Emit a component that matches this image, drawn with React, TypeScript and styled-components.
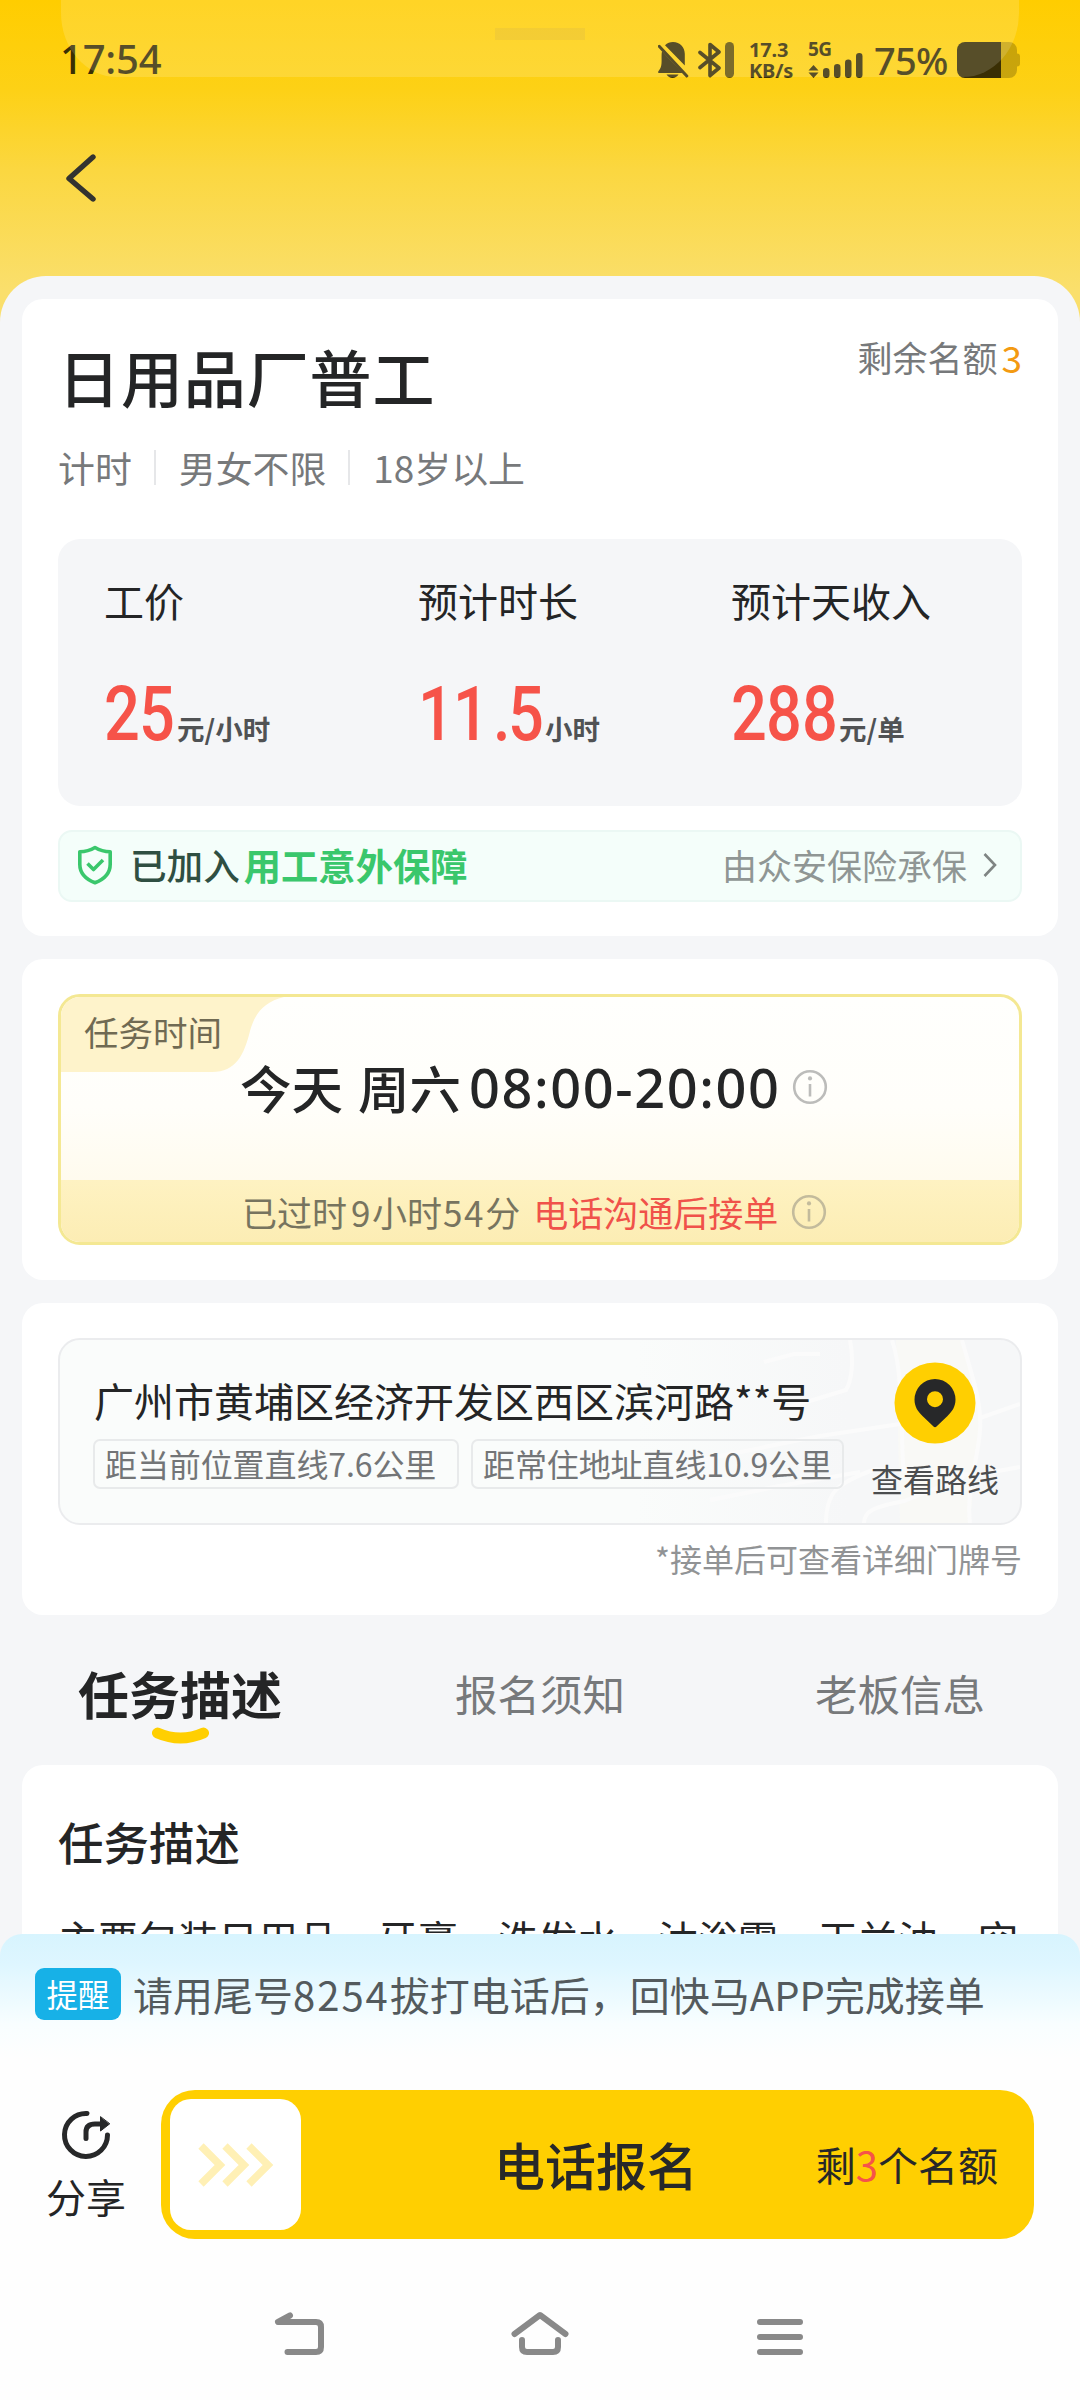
import React from "react";
import styled, { createGlobalStyle } from "styled-components";

const CJK = `"Noto Sans CJK SC", "Noto Sans", sans-serif`;
const LATIN = `"Noto Sans", "Noto Sans CJK SC", sans-serif`;

const GlobalStyle = createGlobalStyle`
  * { box-sizing: border-box; }
  body { margin: 0; background: #fff; font-family: ${CJK}; }
  svg { display: block; flex: none; }
`;

const Screen = styled.main`
  position: relative;
  width: 1080px;
  height: 2400px;
  overflow: hidden;
  display: flex;
  flex-direction: column;
  background: linear-gradient(180deg, #ffcd00 0, #fdd116 90px, #fbd740 170px, #fadf6c 290px, #fadf6c 400px, #fff 401px);
`;

const Text = styled.span<{
  $size: number;
  $color?: string;
  $weight?: number;
  $line?: number;
  $space?: number;
  $left?: number;
}>`
  margin: 0 0 0 ${(p) => p.$left ?? 0}px;
  font-size: ${(p) => p.$size}px;
  color: ${(p) => p.$color ?? "#242526"};
  font-weight: ${(p) => p.$weight ?? 400};
  line-height: ${(p) => (p.$line ? `${p.$line}px` : "inherit")};
  letter-spacing: ${(p) => p.$space ?? 0}px;
  white-space: nowrap;
`;

/* ---------- status bar ---------- */

const StatusBar = styled.header`
  height: 120px;
  padding: 0 60px 0 60px;
  display: flex;
  align-items: center;
  justify-content: space-between;
  color: #3a2f04;
`;

const Clock = styled.time`
  margin-top: -2px;
  font: 500 40px/60px ${LATIN};
  letter-spacing: -0.2px;
`;

const StatusIcons = styled.div`
  display: flex;
  align-items: center;
`;

const BluetoothIcon = styled.svg`
  margin-left: 9px;
`;

const Speed = styled.div`
  width: 42px;
  margin: 0 17px 0 15px;
  display: flex;
  flex-direction: column;
  font: 700 20px/21px ${LATIN};
  letter-spacing: -0.2px;
  white-space: nowrap;
`;

const Signal = styled.div`
  width: 55px;
  height: 36px;
  position: relative;
`;

const Network = styled.span`
  position: absolute;
  left: 0;
  top: -3px;
  font: 700 19px/20px ${LATIN};
  letter-spacing: -0.5px;
`;

const Percent = styled.span`
  width: 73px;
  margin: -1px 10px 0 11px;
  font: 500 38px/60px ${LATIN};
  letter-spacing: -0.7px;
`;

const Glass = styled.div`
  position: absolute;
  left: 61px;
  top: 0;
  width: 958px;
  height: 77px;
  border-radius: 0 0 56px 56px / 0 0 64px 64px;
  background: rgba(255, 255, 255, 0.15);
`;

const GlassHandle = styled.div`
  width: 90px;
  height: 12px;
  margin: 28px auto 0;
  background: rgba(205, 175, 80, 0.22);
`;

const NavBar = styled.nav`
  height: 156px;
  padding: 34px 0 0 64px;
`;

/* ---------- sheet ---------- */

const SheetWrap = styled.div`
  flex: 1;
  min-height: 0;
  display: flex;
  flex-direction: column;
  margin-bottom: -24px;
`;

const Sheet = styled.section`
  flex: 1;
  min-height: 0;
  overflow: hidden;
  padding: 23px 22px 0;
  border-radius: 46px 46px 0 0;
  background: #f5f6f8;
`;

const Card = styled.article<{ $top?: number; $height: number; $pad: number }>`
  height: ${(p) => p.$height}px;
  margin-top: ${(p) => p.$top ?? 0}px;
  padding: ${(p) => p.$pad}px 36px 0;
  border-radius: 21px;
  background: #fff;
`;

const TitleRow = styled.div`
  display: flex;
  justify-content: space-between;
  align-items: flex-start;
`;

const Quota = styled.div`
  display: flex;
  margin: -4px 1px 0 0;
  gap: 4px;
  line-height: 40px;
`;

const Meta = styled.div`
  display: flex;
  align-items: center;
  margin-top: 36px;
  line-height: 40px;
`;

const Divider = styled.i`
  width: 2px;
  height: 35px;
  margin: 0 23px 0 22px;
  background: #e6e7e9;
`;

const Stats = styled.div`
  height: 267px;
  margin-top: 52px;
  padding: 39px 0 0 46px;
  display: grid;
  grid-template-columns: 314px 313px 1fr;
  border-radius: 22px;
  background: #f5f6f8;
`;

const Stat = styled.div`
  display: flex;
  flex-direction: column;
`;

const StatValue = styled.div`
  display: flex;
  align-items: baseline;
  margin-top: 62px;
`;

const Figure = styled.span<{ $width: number }>`
  display: flex;
  width: ${(p) => p.$width}px;
  margin-right: 3px;
  color: #f65349;
  font: 500 76px/60px Roboto, sans-serif;
`;

const Digit = styled.span<{ $narrow?: boolean }>`
  width: ${(p) => (p.$narrow ? 15 : 35.3)}px;
  margin-left: ${(p) => (p.$narrow ? 4 : 0)}px;
  transform: scaleX(0.83);
  transform-origin: 0 50%;
`;

const Insurance = styled.div`
  height: 72px;
  margin-top: 24px;
  padding: 0 23px 3px 17px;
  display: flex;
  align-items: center;
  border: 2px solid #ebf8f4;
  border-radius: 14px;
  background: #f4fefa;
`;

const Insurer = styled.div`
  margin-left: auto;
  display: flex;
  align-items: center;
  gap: 16px;
`;

/* ---------- schedule ---------- */

const Schedule = styled.div`
  position: relative;
  height: 251px;
  overflow: hidden;
  display: flex;
  flex-direction: column;
  justify-content: space-between;
  border: 3px solid #f4e893;
  border-radius: 22px;
  background: linear-gradient(180deg, #fffffd 0%, #fffefa 45%, #fffbee 75%);
`;

const ScheduleTag = styled.div`
  position: absolute;
  left: 0;
  top: 0;
  padding: 14px 0 0 23px;
`;

const TagShape = styled.svg`
  position: absolute;
  left: 0;
  top: 0;
`;

const TagLabel = styled.span`
  position: relative;
  color: #706a53;
  font-size: 34.5px;
  line-height: 40px;
`;

const ScheduleMain = styled.div`
  display: flex;
  align-items: center;
  height: 60px;
  margin-top: 60px;
  padding-left: 179px;
`;

const Hours = styled.span`
  margin: 0 12px 0 8px;
  font: 500 54px/60px ${LATIN};
  letter-spacing: 1.6px;
  color: #242526;
`;

const ScheduleFoot = styled.div`
  height: 62px;
  padding: 2px 0 0 181px;
  display: flex;
  align-items: center;
  gap: 13px;
  background: linear-gradient(180deg, #fef2c2, #fcedb4);
`;

const Num = styled.span<{ $gap?: number }>`
  margin-left: ${(p) => p.$gap ?? 0}px;
  letter-spacing: ${(p) => (p.$gap === undefined ? 2 : 1.6)}px;
`;

/* ---------- address ---------- */

const Place = styled.div`
  position: relative;
  height: 187px;
  overflow: hidden;
  display: flex;
  justify-content: space-between;
  border: 2px solid #ebecee;
  border-radius: 22px;
  background: linear-gradient(90deg, #fafcfb 60%, #f6f7f8 82%);
`;

const MapArt = styled.svg`
  position: absolute;
  right: 0;
  top: 0;
`;

const PlaceInfo = styled.div`
  position: relative;
  padding: 38px 0 0 34px;
`;

const Chips = styled.div`
  display: flex;
  gap: 12px;
  margin: 17px 0 0 -1px;
`;

const Chip = styled.span<{ $width: number }>`
  width: ${(p) => p.$width}px;
  height: 50px;
  padding-left: 10px;
  border: 2px solid #e8eaeb;
  border-radius: 7px;
  color: #737577;
  font-size: 32px;
  line-height: 44px;
  letter-spacing: -0.1px;
  white-space: nowrap;
`;

const Route = styled.div`
  position: relative;
  width: 130px;
  margin: 22px 20px 0 0;
  display: flex;
  flex-direction: column;
  align-items: center;
  gap: 14px;
`;

const Note = styled.p`
  margin: 15px 0 0;
  color: #919395;
  font-size: 32px;
  line-height: 36px;
  text-align: right;
`;

/* ---------- tabs ---------- */

const Tabs = styled.div`
  height: 150px;
  margin: 0 -22px;
  display: grid;
  grid-template-columns: repeat(3, 1fr);
  justify-items: center;
`;

const Tab = styled.div`
  display: flex;
  flex-direction: column;
  align-items: center;
  padding-top: 48px;
  gap: 4px;
`;

const Body = styled.p`
  margin: 43px 0 0;
  font-size: 40px;
  line-height: 54px;
  color: #242526;
  white-space: nowrap;
`;

/* ---------- footer ---------- */

const Footer = styled.footer`
  position: relative;
  height: 466px;
  flex: none;
  display: flex;
  flex-direction: column;
  border-radius: 22px 22px 0 0;
  background: linear-gradient(180deg, #d7f4fe 0, #def6ff 30px, #f8feff 90px, #fefefe 125px);
`;

const Reminder = styled.div`
  display: flex;
  align-items: center;
  padding: 34px 0 0 35px;
`;

const Badge = styled.span`
  width: 86px;
  height: 52px;
  margin-right: 12px;
  border-radius: 9px;
  background: #17b1e7;
  color: #fff;
  font-size: 31.5px;
  line-height: 50px;
  text-align: center;
`;

const Actions = styled.div`
  display: flex;
  margin-top: 70px;
  padding: 0 46px 0 30px;
`;

const Share = styled.div`
  width: 112px;
  margin-right: 19px;
  padding-top: 20px;
  display: flex;
  flex-direction: column;
  align-items: center;
  gap: 14px;
`;

const ApplyButton = styled.div`
  flex: 1;
  height: 149px;
  padding: 0 36px 0 9px;
  display: flex;
  align-items: center;
  border-radius: 34px;
  background: #ffcf01;
`;

const Knob = styled.div`
  width: 131px;
  height: 131px;
  display: flex;
  align-items: center;
  justify-content: center;
  border-radius: 21px;
  background: #fff;
`;

const ApplyLabel = styled.strong`
  margin: -2px 0 0 193px;
  font-size: 51px;
  font-weight: 500;
  line-height: 60px;
  color: #272829;
`;

const Remaining = styled.div`
  margin: -1px 0 0 auto;
  font-size: 40px;
  line-height: 48px;
  color: #272829;
`;

const SystemNav = styled.div`
  display: flex;
  justify-content: space-between;
  margin-top: 70px;
  padding: 0 270px;
`;

const NavIcon = ({ d }: { d: string }) => (
  <svg width="60" height="56" viewBox="0 0 60 56" fill="none">
    <path d={d} stroke="#898989" strokeWidth="6" strokeLinecap="round" strokeLinejoin="round" />
  </svg>
);

const Info = ({ color }: { color: string }) => (
  <svg width="36" height="36" viewBox="0 0 36 36" fill="none">
    <circle cx="18" cy="18" r="15.8" stroke={color} strokeWidth="2.6" />
    <circle cx="18" cy="9.4" r="2.1" fill={color} />
    <path d="M18 15v12.6" stroke={color} strokeWidth="2.6" />
  </svg>
);

interface StatProps {
  label: string;
  value: string;
  unit: string;
  width: number;
}

const stats: StatProps[] = [
  { label: "工价", value: "25", unit: "元/小时", width: 70 },
  { label: "预计时长", value: "11.5", unit: "小时", width: 124 },
  { label: "预计天收入", value: "288", unit: "元/单", width: 105 },
];

const meta = ["计时", "男女不限", "18岁以上"];
const tabs = ["任务描述", "报名须知", "老板信息"];

export default function App() {
  return (
    <Screen>
      <GlobalStyle />
      <StatusBar>
        <Clock>17:54</Clock>
        <StatusIcons>
          <svg width="31" height="36" viewBox="0 0 31 36" fill="currentColor">
            <path d="M7 3.2C9.300 1.200 12 0 15 0c7 0 11.800 5 11.800 12v11.500L7 3.200zM4 9.300 24.500 31H.8c-.8 0-.9-1-.4-1.700C2.500 26.500 3.600 24.500 3.600 19c0-3.700-.2-7 .4-9.700z" />
            <path d="M8.500 32.500h12c-1.500 2.300-3.500 3.500-6 3.500s-4.500-1.200-6-3.500z" />
            <path d="M1.200 4.300 28.800 34" stroke="currentColor" strokeWidth="3" strokeLinecap="round" />
          </svg>
          <BluetoothIcon width="36" height="36" viewBox="0 0 36 36" fill="none">
            <path
              d="M2 10.500 21 26 12 33.500V2.500L21 10 2 25.500"
              stroke="currentColor"
              strokeWidth="3.600"
              strokeLinejoin="round"
              strokeLinecap="round"
            />
            <rect x="27" width="9" height="36" rx="4.500" fill="currentColor" opacity=".78" />
          </BluetoothIcon>
          <Speed>
            <span>17.3</span>
            <span>KB/s</span>
          </Speed>
          <Signal>
            <Network>5G</Network>
            <svg width="55" height="36" viewBox="0 0 55 36" fill="currentColor">
              <path d="M5.500 23 10.500 28.500H.5zM5.500 36 10.500 30.500H.5z" />
              <rect x="15" y="26" width="6.500" height="10" rx="3.200" />
              <rect x="26" y="22" width="6.500" height="14" rx="3.200" />
              <rect x="37" y="17.500" width="6.500" height="18.500" rx="3.200" />
              <rect x="48" y="11" width="6.500" height="25" rx="3.200" />
            </svg>
          </Signal>
          <Percent>75%</Percent>
          <svg width="63" height="36" viewBox="0 0 63 36" fill="currentColor">
            <path d="M44 0h8a8 8 0 0 1 8 8v3.500a3 3 0 0 1 3 3v7a3 3 0 0 1-3 3V28a8 8 0 0 1-8 8h-8z" opacity=".27" />
            <path d="M8 0h36v36H8a8 8 0 0 1-8-8V8a8 8 0 0 1 8-8z" />
          </svg>
        </StatusIcons>
      </StatusBar>
      <Glass>
        <GlassHandle />
      </Glass>
      <NavBar>
        <svg width="34" height="48" viewBox="0 0 34 48" fill="none">
          <path d="M29 3 5 24.500 29 45" stroke="#333330" strokeWidth="5.400" strokeLinecap="round" strokeLinejoin="round" />
        </svg>
      </NavBar>

      <SheetWrap>
        <Sheet>
          <Card $height={637} $pad={42}>
            <TitleRow>
              <Text as="h1" $size={62} $weight={500} $line={70} $space={0.9}>
                日用品厂普工
              </Text>
              <Quota>
                <Text $size={35} $color="#77797b">剩余名额</Text>
                <Text $size={37} $color="#f39a12" $space={-1}>3</Text>
              </Quota>
            </TitleRow>
            <Meta>
              {meta.map((item, i) => (
                <React.Fragment key={item}>
                  {i > 0 && <Divider />}
                  <Text $size={36.9} $color="#77797b">{item}</Text>
                </React.Fragment>
              ))}
            </Meta>
            <Stats>
              {stats.map(({ label, value, unit, width }) => (
                <Stat key={label}>
                  <Text $size={40} $line={44}>{label}</Text>
                  <StatValue>
                    <Figure $width={width}>
                      {[...value].map((c, i) => (
                        <Digit key={i} $narrow={c === "."}>{c}</Digit>
                      ))}
                    </Figure>
                    <Text $size={27.5} $weight={700} $color="#505254">{unit}</Text>
                  </StatValue>
                </Stat>
              ))}
            </Stats>
            <Insurance>
              <svg width="36" height="40" viewBox="0 0 36 40" fill="none" stroke="#3ac76c" strokeWidth="3.600" strokeLinejoin="round">
                <path d="M18 2.500c5 3 10 4.200 15.200 4.300v12.400c0 9-6 15-15.200 18.600C8.800 34.200 2.800 28.200 2.800 19.200V6.800C8 6.700 13 5.500 18 2.500z" />
                <path d="m10.500 18.500 6 6 9.500-9.500" />
              </svg>
              <Text $size={36.6} $weight={500} $color="#2f4f42" $left={17}>已加入</Text>
              <Text $size={37.3} $weight={700} $color="#3ac76c" $left={4}>用工意外保障</Text>
              <Insurer>
                <Text $size={35} $color="#8f9694">由众安保险承保</Text>
                <svg width="14" height="26" viewBox="0 0 14 26" fill="none">
                  <path d="M1.500 2 12 13 1.500 24" stroke="#7f8583" strokeWidth="2.600" />
                </svg>
              </Insurer>
            </Insurance>
          </Card>

          <Card $top={23} $height={321} $pad={35}>
            <Schedule>
              <ScheduleTag>
                <TagShape width="225" height="76" viewBox="0 0 225 76">
                  <path d="M0 0h223c-20 5-29 16-34 34-6 24-14 41-38 41H0z" fill="#fef3cb" />
                </TagShape>
                <TagLabel>任务时间</TagLabel>
              </ScheduleTag>
              <ScheduleMain>
                <Text $size={51.5} $weight={500} $line={60}>今天</Text>
                <Text $size={51.5} $weight={500} $line={60} $left={15}>周六</Text>
                <Hours>08:00-20:00</Hours>
                <Info color="#bcbcba" />
              </ScheduleMain>
              <ScheduleFoot>
                <Text $size={35} $line={48} $color="#77745f">
                  已过时<Num $gap={4}>9</Num>小时<Num $gap={1}>54</Num>分
                </Text>
                <Text $size={35} $line={48} $color="#f0524a">电话沟通后接单</Text>
                <Info color="#c3bb9c" />
              </ScheduleFoot>
            </Schedule>
          </Card>

          <Card $top={23} $height={312} $pad={35}>
            <Place>
              <MapArt width="340" height="183" viewBox="0 0 340 183" fill="none" stroke="#fbfbfb" strokeWidth="4">
                <path d="M216 0h66l18 70-10 113h-70z" fill="#f9f9f6" stroke="none" />
                <path d="M84 22l30-8 26 0M170 0c4 20 2 40-4 50l-66 20M212 0c14 40 8 120 12 130M282 0c8 30 20 60 18 90s-14 60-10 93M300 78l40-14M20 120l120-24 80-12M30 160l70-14 80-14M146 183c0-30 10-40 50-54l100 6 44-8M184 183c0-12 10-16 40-22l60-24" />
              </MapArt>
              <PlaceInfo>
                <Text as="div" $size={40} $line={44}>广州市黄埔区经济开发区西区滨河路**号</Text>
                <Chips>
                  <Chip $width={366}>距当前位置直线7.6公里</Chip>
                  <Chip $width={373}>距常住地址直线10.9公里</Chip>
                </Chips>
              </PlaceInfo>
              <Route>
                <svg width="82" height="82" viewBox="0 0 82 82">
                  <circle cx="41" cy="41" r="40.500" fill="#ffcf01" />
                  <path
                    fillRule="evenodd"
                    d="M41 17a20.500 20.500 0 0 1 20.500 20.500c0 7.500-3.500 12-8 16.500L42.500 64.500a2.200 2.200 0 0 1-3 0L28.500 54c-4.500-4.500-8-9-8-16.500A20.500 20.500 0 0 1 41 17zm0 12.200a8 8 0 1 0 0 16 8 8 0 0 0 0-16z"
                    fill="#272829"
                  />
                </svg>
                <Text $size={32} $line={40} $color="#4b4d4f">查看路线</Text>
              </Route>
            </Place>
            <Note>*接单后可查看详细门牌号</Note>
          </Card>

          <Tabs>
            {tabs.map((name, i) => (
              <Tab key={name}>
                <Text $size={i ? 42.5 : 51} $weight={i ? 400 : 700} $line={60} $color={i ? "#77797b" : "#242526"}>
                  {name}
                </Text>
                {i === 0 && (
                  <svg width="58" height="18" viewBox="0 0 58 18" fill="none">
                    <path d="M6.500 6q23 10 46 0" stroke="#ffcf01" strokeWidth="11" strokeLinecap="round" />
                  </svg>
                )}
              </Tab>
            ))}
          </Tabs>

          <Card $height={300} $pad={49}>
            <Text as="div" $size={45.5} $weight={500} $line={54}>任务描述</Text>
            <Body>主要包装日用品、牙膏、洗发水、沐浴露、玉兰油、空</Body>
          </Card>
        </Sheet>
      </SheetWrap>

      <Footer>
        <Reminder>
          <Badge>提醒</Badge>
          <Text $size={40} $line={48} $color="#535a5d">
            请用尾号<Num>8254</Num>拔打电话后，回快马APP完成接单
          </Text>
        </Reminder>
        <Actions>
          <Share>
            <svg width="50" height="50" viewBox="0 0 50 50" fill="none" stroke="#272829" strokeWidth="5" strokeLinecap="round">
              <path d="M26 3.500A21.500 21.500 0 1 0 46.500 25" />
              <path d="M25 28.500V22c0-6 3.500-8 9-8h6" />
              <path d="M39.500 7v14l9-7z" fill="#272829" strokeWidth="1" strokeLinejoin="round" />
            </svg>
            <Text $size={40} $line={44}>分享</Text>
          </Share>
          <ApplyButton>
            <Knob>
              <svg width="76" height="44" viewBox="0 0 76 44" fill="none" stroke="#fff0b5" strokeWidth="7.500">
                <path d="M3 3l19 19L3 41M27 3l19 19-19 19M51 3l19 19-19 19" />
              </svg>
            </Knob>
            <ApplyLabel>电话报名</ApplyLabel>
            <Remaining>
              剩<Text $size={40} $color="#f65349">3</Text>个名额
            </Remaining>
          </ApplyButton>
        </Actions>
        <SystemNav>
          <NavIcon d="M20 6.500 8 13h38q5 0 5 5v20q0 5-5 5H17.500" />
          <NavIcon d="M4.500 25 30 6 55.500 25M12 31v7q0 5 5 5h26q5 0 5-5v-7" />
          <NavIcon d="M10 13h40M10 28h40M10 43h40" />
        </SystemNav>
      </Footer>
    </Screen>
  );
}
